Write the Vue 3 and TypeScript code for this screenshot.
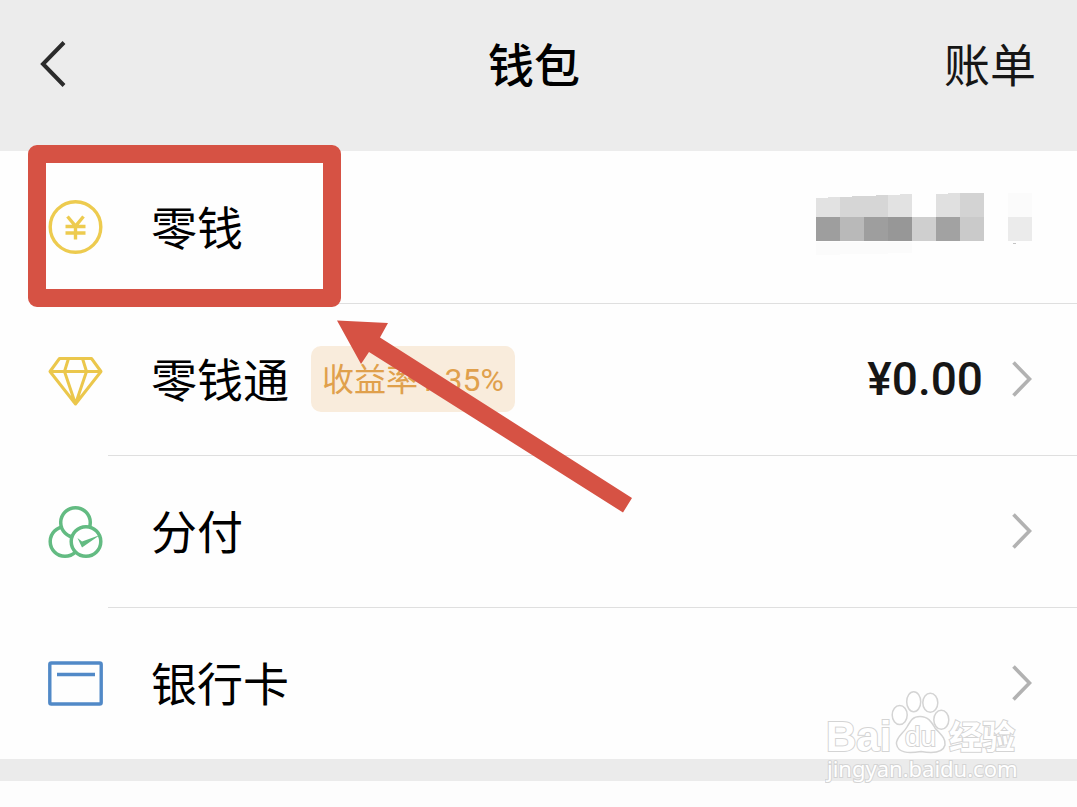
<script setup lang="ts">
type IconName = 'coin' | 'diamond' | 'rings' | 'card'

interface WalletItem {
  icon: IconName
  label: string
  tag?: string
  amount?: string
  masked?: boolean
}

interface Tile {
  points: string
  fill: string
}

const items: WalletItem[] = [
  { icon: 'coin', label: '零钱', masked: true },
  { icon: 'diamond', label: '零钱通', tag: '收益率1.35%', amount: '¥0.00' },
  { icon: 'rings', label: '分付' },
  { icon: 'card', label: '银行卡' },
]

const tiles: Tile[] = [
  { points: '0,5 24,4 24,24 0,24', fill: '#e2e2e2' },
  { points: '24,4 72,2 72,24 24,24', fill: '#d6d6d6' },
  { points: '72,2 96,1 96,24 72,24', fill: '#e2e2e2' },
  { points: '120,1 144,0 144,24 120,24', fill: '#e0e0e0' },
  { points: '144,0 168,0 168,24 144,24', fill: '#d3d3d3' },
  { points: '192,0 216,0 216,24 192,24', fill: '#fbfbfb' },
  { points: '0,24 24,24 24,48 0,48', fill: '#9e9e9e' },
  { points: '24,24 48,24 48,48 24,48', fill: '#b9b9b9' },
  { points: '48,24 72,24 72,48 48,48', fill: '#9e9e9e' },
  { points: '72,24 96,24 96,48 72,48', fill: '#979797' },
  { points: '96,24 120,24 120,48 96,48', fill: '#cfcfcf' },
  { points: '120,24 144,24 144,48 120,48', fill: '#a2a2a2' },
  { points: '144,24 168,24 168,48 144,48', fill: '#cacaca' },
  { points: '192,24 216,24 216,48 192,48', fill: '#ebebeb' },
  { points: '0,49 96,49 96,60 0,62', fill: '#fbfbfb' },
  { points: '197,50 200,50 200,51 197,51', fill: '#c4c4c4' },
]
</script>

<template>
  <div class="page">
    <header class="bar">
      <button class="back" type="button" aria-label="返回">
        <svg width="26" height="48" viewBox="0 0 26 48" fill="none" stroke="#2b2b2b" stroke-width="4">
          <path d="M24 2.500 L3 24 L24 45.500" />
        </svg>
      </button>
      <h1 class="title">钱包</h1>
      <a class="bill" href="#">账单</a>
    </header>

    <main class="list">
      <a v-for="item in items" :key="item.label" class="row" href="#">
        <svg v-if="item.icon === 'coin'" class="icon" viewBox="0 0 55 55" fill="none" stroke="#edcb4f">
          <circle cx="27.500" cy="27" r="25.300" stroke-width="3.400" />
          <path d="M19.500 16.500 L27.500 26 L35.500 16.500 M27.500 25 V39.500 M17.500 26.500 H37.500 M17.500 33 H37.500" stroke-width="3.400" />
        </svg>
        <svg v-else-if="item.icon === 'diamond'" class="icon" viewBox="0 0 55 55" fill="none" stroke="#ebc74c" stroke-width="3" stroke-linejoin="round">
          <path d="M11.500 6.500 H43.500 L53 19.500 L27.500 52 L2 19.500 Z M2 19.500 H53 M20.500 6.500 L16.500 19.500 L27.500 52 L38.500 19.500 L34.500 6.500" />
        </svg>
        <svg v-else-if="item.icon === 'rings'" class="icon" viewBox="0 0 55 55" fill="#fff" stroke="#63bb82" stroke-width="3.500">
          <circle cx="17" cy="37.500" r="14.800" />
          <circle cx="27.500" cy="18.500" r="14.800" />
          <circle cx="38" cy="37.500" r="14.800" />
          <path d="M29.500 34 L34 37.500 L52 31 L34 43.500 Z" fill="#63bb82" stroke="none" />
        </svg>
        <svg v-else class="icon" viewBox="0 0 55 55" fill="none" stroke="#5189c7" stroke-width="3.400">
          <rect x="1.800" y="7" width="51.400" height="41" rx="1.500" />
          <path d="M9 18.500 H47" />
        </svg>

        <span class="label">{{ item.label }}</span>
        <span v-if="item.tag" class="tag">{{ item.tag }}</span>
        <span class="end">
          <svg v-if="item.masked" class="mosaic" width="216" height="68" viewBox="0 0 216 68" shape-rendering="crispEdges" role="img" aria-label="金额已隐藏">
            <polygon v-for="tile in tiles" :key="tile.points" :points="tile.points" :fill="tile.fill" />
          </svg>
          <template v-else>
            <span v-if="item.amount" class="amount">{{ item.amount }}</span>
            <svg class="chevron" width="20" height="36" viewBox="0 0 20 36" fill="none" stroke="#b2b2b2" stroke-width="3.600">
              <path d="M1.500 1.500 L17.500 18 L1.500 34.500" />
            </svg>
          </template>
        </span>
      </a>

      <div class="frame" aria-hidden="true"></div>
      <svg class="arrow" width="296" height="194" viewBox="0 0 296 194" aria-hidden="true">
        <polygon points="0,0.500 51,3 43,17.500 295,178 286,192.500 32,32 24,44" fill="#d65244" />
      </svg>
    </main>

    <div class="band">
      <svg class="watermark" width="210" height="106" viewBox="0 0 210 106" role="img" aria-label="Baidu 经验 jingyan.baidu.com">
        <g fill="#fff" stroke="#d4d4d4" stroke-width="1.500">
          <ellipse cx="74.700" cy="25" rx="7.500" ry="9.500" />
          <ellipse cx="88.700" cy="11.700" rx="7" ry="10" />
          <ellipse cx="105.300" cy="12.700" rx="7.500" ry="9.500" />
          <ellipse cx="116.300" cy="29.700" rx="7.500" ry="9.500" />
          <path d="M95 26.500 C104 26.500 107 33 110 38 C115 44 121 48 120 55 C118 63 108 63.500 96 61.500 C83 63.500 73 63 71.500 54 C71 47 78 44 82 37 C86 30 88 26.500 95 26.500 Z" />
        </g>
        <g class="outlined">
          <text class="brand" x="1" y="61">Bai</text>
          <text class="du" x="80" y="56">du</text>
          <text class="brand-cn" x="124" y="59">经验</text>
          <text class="site" x="2" y="87">jingyan.baidu.com</text>
        </g>
      </svg>
    </div>
  </div>
</template>

<style>
body {
  margin: 0;
  background: #fdfdfd;
}
</style>

<style scoped>
.page {
  min-height: 100vh;
  font-family: Roboto, "Noto Sans CJK SC", sans-serif;
  font-size: 46px;
  line-height: 68px;
  color: #000;
  overflow: hidden;
}

.bar {
  display: grid;
  grid-template-columns: 1fr auto 1fr;
  align-items: center;
  padding: 28px 41px 51px 32px;
  background: #ececec;
}

.back {
  display: flex;
  justify-self: start;
  padding: 0 8px;
  border: 0;
  background: none;
}

.title,
.bill,
.label {
  padding-top: 4px;
}

.title {
  margin: 0;
  font-size: 46px;
  font-weight: 500;
}

.bill {
  justify-self: end;
  color: #161616;
  text-decoration: none;
}

.list {
  position: relative;
  background: #fefefe;
}

.row {
  position: relative;
  display: flex;
  align-items: center;
  box-sizing: border-box;
  min-height: 152px;
  padding: 0 45px 0 48px;
  color: inherit;
  text-decoration: none;
}

.row + .row::after {
  content: "";
  position: absolute;
  top: 0;
  right: 0;
  left: 108px;
  height: 1px;
  background: #dfdfdf;
}

.icon {
  flex: none;
  width: 55px;
  height: 55px;
  margin-right: 48px;
}

.tag {
  margin-left: 22px;
  padding: 10px 11px 8px;
  border-radius: 10px;
  background: #f9ecdc;
  color: #e0a04c;
  font-size: 32px;
  line-height: 48px;
}

.end {
  display: flex;
  align-items: center;
  gap: 29px;
  margin-left: auto;
}

.amount {
  color: #161616;
  font-weight: 500;
}

.frame {
  position: absolute;
  top: -6px;
  left: 28px;
  box-sizing: border-box;
  width: 313px;
  height: 162px;
  border: 18px solid #d65244;
  border-radius: 9px;
}

.arrow {
  position: absolute;
  top: 169px;
  left: 337px;
}

.band {
  position: relative;
  height: 22px;
  background: #ebebeb;
}

.watermark {
  position: absolute;
  right: 42px;
  bottom: -15px;
}

.outlined {
  fill: #fff;
  stroke: #d4d4d4;
  stroke-width: 2px;
  paint-order: stroke;
}

.brand {
  font: 700 42px "Liberation Sans", sans-serif;
}

.du {
  font: 400 28px "Liberation Sans", sans-serif;
}

.brand-cn {
  font: 700 33px "Noto Sans CJK SC", sans-serif;
}

.site {
  font: 400 22px "Noto Sans", sans-serif;
}
</style>
